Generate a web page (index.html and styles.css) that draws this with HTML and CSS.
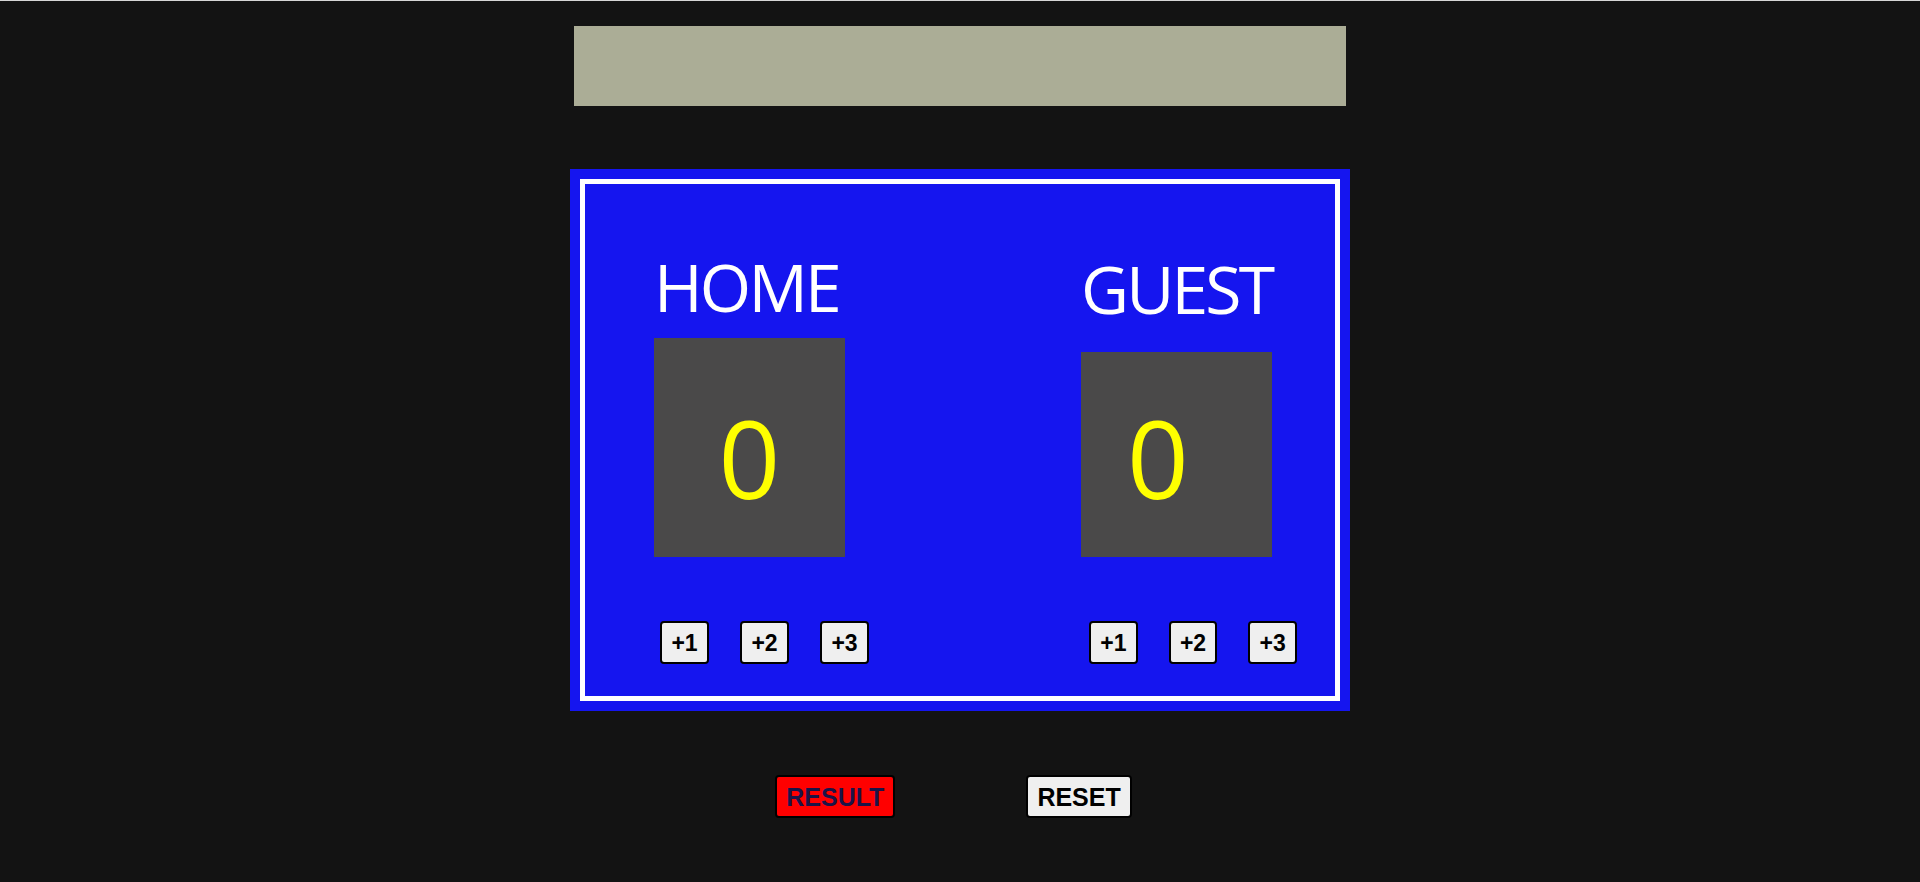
FILE: index.html
```html
<!DOCTYPE html>
<html lang="en">
<head>
<meta charset="utf-8">
<title>Scoreboard</title>
<link rel="stylesheet" href="styles.css">
</head>
<body>
<main class="page">
  <div class="banner"></div>
  <section class="board">
    <div class="board-inner">
      <div class="team">
        <h2 class="team-name team-name--home">HOME</h2>
        <div class="score score--home">0</div>
        <div class="adds adds--home">
          <button class="add">+1</button>
          <button class="add">+2</button>
          <button class="add">+3</button>
        </div>
      </div>
      <div class="team">
        <h2 class="team-name team-name--guest">GUEST</h2>
        <div class="score score--guest">0</div>
        <div class="adds adds--guest">
          <button class="add">+1</button>
          <button class="add">+2</button>
          <button class="add">+3</button>
        </div>
      </div>
    </div>
  </section>
  <div class="actions">
    <button class="action action--result">RESULT</button>
    <button class="action action--reset">RESET</button>
  </div>
</main>
</body>
</html>
```

FILE: styles.css
```css
html, body {
  margin: 0;
  padding: 0;
  background: #131313;
}

body {
  border-top: 1px solid #d6d6d6;
  min-height: 881px;
  font-family: "Open Sans", "Liberation Sans", sans-serif;
}

.page {
  width: 780px;
  margin: 0 auto;
  display: flex;
  flex-direction: column;
  align-items: center;
}

.banner {
  width: 772px;
  height: 80px;
  margin-top: 25px;
  background: #abad96;
}

.board {
  margin-top: 63px;
  width: 780px;
  box-sizing: border-box;
  padding: 10px;
  background: #1515ef;
}

.board-inner {
  height: 512px;
  border: 5px solid #ffffff;
  display: flex;
  gap: 211px;
  padding-left: 69px;
}

.team {
  width: 216px;
  display: flex;
  flex-direction: column;
}

.team-name {
  margin: 0;
  font-family: "Open Sans", "Liberation Sans", sans-serif;
  font-weight: 400;
  font-size: 66px;
  line-height: 66px;
  letter-spacing: -2.8px;
  color: #ffffff;
  white-space: nowrap;
}

.team-name--home {
  margin-top: 69px;
  margin-bottom: 19px;
}

.team-name--guest {
  margin-top: 71px;
  margin-bottom: 31px;
}

.score {
  width: 191px;
  box-sizing: border-box;
  background: #4a4949;
  color: #ffff00;
  font-family: "Open Sans", "Liberation Sans", sans-serif;
  font-size: 108px;
  line-height: 108px;
  text-align: center;
  padding-bottom: 45px;
}

.score--home {
  padding-top: 66px;
}

.score--guest {
  padding-top: 52px;
  padding-right: 37px;
}

.adds {
  display: flex;
  gap: 31px;
  margin-top: 64px;
}

.adds--home {
  padding-left: 6px;
}

.adds--guest {
  padding-left: 8px;
}

.add {
  width: 49px;
  height: 43px;
  box-sizing: border-box;
  padding: 0;
  border: 2px solid #000000;
  border-radius: 4px;
  background: #efefef;
  color: #000000;
  font-family: "Liberation Sans", Arial, sans-serif;
  font-weight: 700;
  font-size: 23px;
  line-height: 26px;
}

.actions {
  display: flex;
  justify-content: center;
  gap: 131px;
  margin-top: 64px;
  width: 100%;
  box-sizing: border-box;
  padding-right: 13px;
}

.action {
  height: 43px;
  box-sizing: border-box;
  padding: 0 9px;
  border: 2px solid #000000;
  border-radius: 4px;
  font-family: "Liberation Sans", Arial, sans-serif;
  font-weight: 700;
  font-size: 25px;
  line-height: 28px;
}

.action--result {
  background: #ff0000;
  color: #1a1448;
}

.action--reset {
  background: #efefef;
  color: #000000;
}
```
